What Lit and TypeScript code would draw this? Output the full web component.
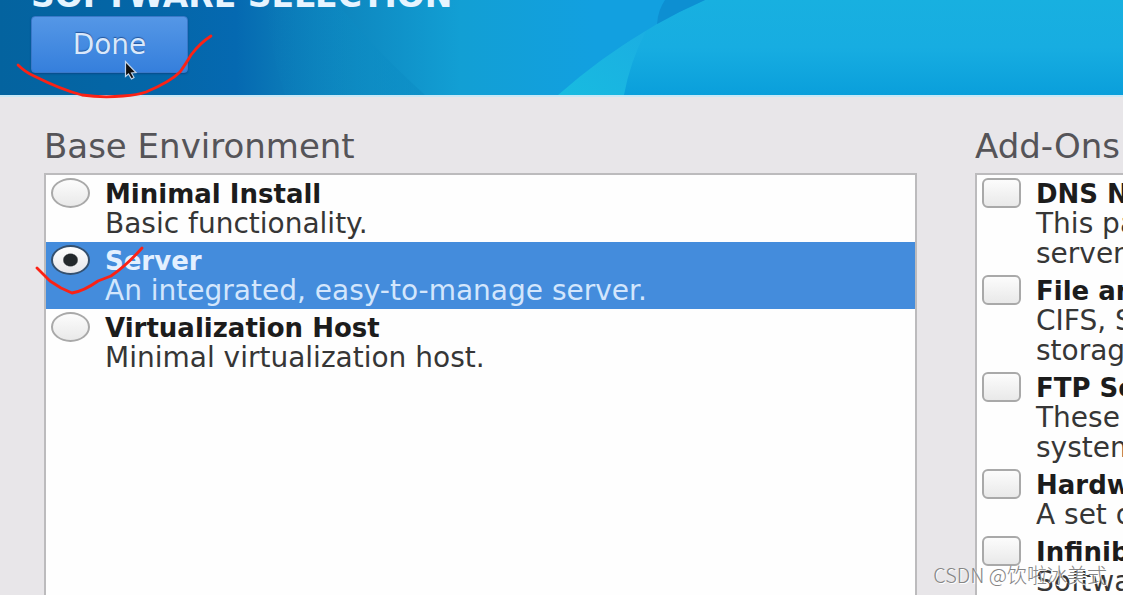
import { LitElement, html, css, svg } from "lit";
import { customElement, property, state } from "lit/decorators.js";

interface Entry {
  id: string;
  title: string;
  lines: string[];
}

const environments: Entry[] = [
  { id: "minimal", title: "Minimal Install", lines: ["Basic functionality."] },
  { id: "server", title: "Server", lines: ["An integrated, easy-to-manage server."] },
  { id: "virt", title: "Virtualization Host", lines: ["Minimal virtualization host."] },
];

const addOns: Entry[] = [
  { id: "dns", title: "DNS Name Server", lines: ["This package", "server"] },
  { id: "file", title: "File and Storage", lines: ["CIFS, SMB", "storage"] },
  { id: "ftp", title: "FTP Server", lines: ["These", "system"] },
  { id: "hardware", title: "Hardware", lines: ["A set of"] },
  { id: "infiniband", title: "Infiniband", lines: ["Software"] },
];

@customElement("option-row")
class OptionRow extends LitElement {
  @property() kind: "radio" | "checkbox" = "radio";
  @property({ attribute: false }) entry!: Entry;
  @property({ type: Boolean, reflect: true }) selected = false;

  static styles = css`
    :host {
      display: block;
      color: #1c1c1c;
    }
    :host([selected]) {
      background: #448cdc;
      color: #e4f0ff;
    }
    .row {
      display: flex;
      align-items: flex-start;
      gap: 15px;
      padding: 3px 5px;
      white-space: nowrap;
    }
    .control {
      appearance: none;
      flex: none;
      box-sizing: border-box;
      width: 39px;
      height: 30px;
      margin: 0;
      border: 2px solid #a9a9a9;
      background: linear-gradient(#fcfcfc, #e9e9e9);
    }
    .radio {
      border-radius: 50%;
    }
    .radio:checked {
      border-color: #34506f;
      background: radial-gradient(ellipse 8px 7px, #23282c 82%, transparent 100%),
        linear-gradient(#ffffff, #e6e6ea);
    }
    .checkbox {
      border-radius: 6px;
    }
    .text {
      display: block;
      padding-top: 1px;
      line-height: 30px;
    }
    .title {
      display: block;
      font-size: 26px;
      font-weight: bold;
    }
    .line {
      display: block;
      font-size: 28px;
      color: #363636;
    }
    :host([selected]) .line {
      color: #d3e6fc;
    }
  `;

  render() {
    return html`<label class="row">
      <input
        class="control ${this.kind}"
        type=${this.kind}
        .checked=${this.selected}
        @change=${() => this.dispatchEvent(new CustomEvent("pick"))}
      />
      <span class="text">
        <span class="title">${this.entry.title}</span>
        ${this.entry.lines.map((l) => html`<span class="line">${l}</span>`)}
      </span>
    </label>`;
  }
}

@customElement("app-root")
class AppRoot extends LitElement {
  @state() private chosen = "server";

  static styles = css`
    :host {
      display: flex;
      flex-direction: column;
      position: relative;
      height: 100vh;
      overflow: hidden;
      background: #e8e6e9;
      font-family: "DejaVu Sans", "Noto Sans", sans-serif;
    }
    .banner {
      position: relative;
      flex: none;
      overflow: hidden;
      padding: 0 31px 22px;
      border-bottom: 2px solid #c8e8f6;
      background: #0b72b5;
    }
    .art {
      position: absolute;
      inset: 0;
      width: 100%;
      height: 100%;
    }
    .page-title {
      position: relative;
      margin: -22px 0 2px;
      font-size: 33px;
      line-height: 36px;
      white-space: nowrap;
      color: #e6f4ff;
    }
    .done {
      position: relative;
      display: block;
      width: 157px;
      height: 57px;
      padding: 0;
      border: 1px solid #3a78c8;
      border-radius: 4px;
      background: linear-gradient(#5597e6, #357fdc);
      box-shadow: 0 1px 2px #084a8a;
      font-family: inherit;
      font-size: 28px;
      color: #d9e8fb;
      text-shadow: 0 -1px 1px #24569c;
    }
    .main {
      flex: 1;
      display: flex;
      gap: 58px;
      min-height: 0;
      padding: 29px 0 0 44px;
    }
    .column {
      flex: 0 0 calc(100% - 206px);
      display: flex;
      flex-direction: column;
    }
    .heading {
      margin: 0 0 7px;
      font-size: 34px;
      line-height: 40px;
      font-weight: normal;
      white-space: nowrap;
      color: #555458;
    }
    .list {
      flex: 1;
      border: 2px solid #bcbbbd;
      border-bottom: 0;
      background: #fefefe;
    }
    .marks {
      position: absolute;
      top: 0;
      left: 0;
      width: 260px;
      height: 310px;
      pointer-events: none;
    }
    .watermark {
      position: absolute;
      right: 16px;
      bottom: 7px;
      font-family: "Noto Sans CJK SC", sans-serif;
      font-weight: 300;
      font-size: 20px;
      line-height: 26px;
      white-space: nowrap;
      color: #858585;
      text-shadow: 1px 1px 0 #ffffff;
      pointer-events: none;
    }
  `;

  private art() {
    return svg`<svg class="art" viewBox="0 0 1123 95" preserveAspectRatio="none" aria-hidden="true">
      <defs>
        <linearGradient id="sea">
          <stop offset="0" stop-color="#04639f" />
          <stop offset=".14" stop-color="#0466a8" />
          <stop offset=".21" stop-color="#0569b1" />
          <stop offset=".25" stop-color="#0a78b7" />
          <stop offset=".31" stop-color="#0e88c0" />
          <stop offset=".41" stop-color="#129fd4" />
          <stop offset=".53" stop-color="#12a0e0" />
        </linearGradient>
        <linearGradient id="ray" x2="0" y2="1">
          <stop offset="0" stop-color="#18b0e0" />
          <stop offset=".5" stop-color="#17ade1" />
          <stop offset="1" stop-color="#0a9fdb" />
        </linearGradient>
        <linearGradient id="fold" x1="1" x2="0" y2="1">
          <stop offset="0" stop-color="#1baee2" />
          <stop offset="1" stop-color="#18bbe0" />
        </linearGradient>
        <linearGradient id="shade">
          <stop offset="0" stop-color="#0c8cc4" stop-opacity="0" />
          <stop offset="1" stop-color="#0c8cc4" stop-opacity=".6" />
        </linearGradient>
      </defs>
      <rect width="1123" height="95" fill="url(#sea)" />
      <path d="M335 0 Q370 45 425 95 L285 95 Q270 50 265 0Z" fill="url(#shade)" />
      <path d="M705 0 Q680 11 657 24 Q602 56 558 95 L1123 95 L1123 0Z" fill="url(#ray)" />
      <path d="M646 31 Q600 58 558 95 L624 95 Q630 62 646 31Z" fill="url(#fold)" />
      <path d="M665 0 L705 0 Q680 11 657 24 Q658 10 665 0Z" fill="#0d8fd2" />
    </svg>`;
  }

  private marks() {
    return svg`<svg class="marks" viewBox="0 0 260 310" aria-hidden="true">
      <path d="M125.500 61.500 V76.500 L128.500 74 L131.500 79 L134 77.500 L131.500 73 L136 72.500Z"
        fill="#101010" stroke="#c3d5ea" stroke-width="1.200" />
      <g fill="none" stroke="#fb2215" stroke-width="2.800" stroke-linecap="round" stroke-linejoin="round">
        <path d="M18 65 Q25 72 34 76 Q62 90 82 95 Q102 98 123 96 Q138 95 146 92 Q170 82 180 72 Q187 62 191 55 Q200 43 211 36" />
        <path d="M37 268 L50 281 L61 288 L72 293 Q84 291 98 281 L111 276 Q127 265 142 248" />
      </g>
    </svg>`;
  }

  render() {
    return html`
      <header class="banner">
        ${this.art()}
        <h1 class="page-title">SOFTWARE SELECTION</h1>
        <button class="done" type="button">Done</button>
      </header>
      <main class="main">
        <section class="column">
          <h2 class="heading">Base Environment</h2>
          <div class="list">
            ${environments.map(
              (e) => html`<option-row
                kind="radio"
                .entry=${e}
                ?selected=${this.chosen === e.id}
                @pick=${() => (this.chosen = e.id)}
              ></option-row>`
            )}
          </div>
        </section>
        <section class="column">
          <h2 class="heading">Add-Ons</h2>
          <div class="list">
            ${addOns.map((e) => html`<option-row kind="checkbox" .entry=${e}></option-row>`)}
          </div>
        </section>
      </main>
      ${this.marks()}
      <div class="watermark">CSDN @饮啦冰美式</div>
    `;
  }
}
